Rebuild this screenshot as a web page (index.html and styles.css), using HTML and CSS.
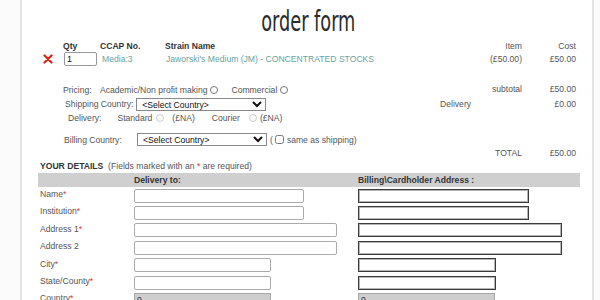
FILE: index.html
```html
<!DOCTYPE html>
<html lang="en">
<head>
    <meta charset="UTF-8">
    <title>Order form</title>
    <link rel="stylesheet" href="styles.css">
</head>
<body>
    <div class="page">
        <h1 class="title"><span>order form</span></h1>

        <!-- basket -->
        <div class="basket">
            <span></span>
            <span class="head">Qty</span>
            <span class="head">CCAP No.</span>
            <span class="head">Strain Name</span>
            <span class="num">Item</span>
            <span class="num">Cost</span>

            <span class="remove">
                <svg width="10" height="10" viewBox="0 0 10 10"><path d="M1.5 1.5 L8.5 8.5 M8.5 1.5 L1.5 8.5" stroke="#d9261c" stroke-width="2.2" stroke-linecap="round"/></svg>
            </span>
            <span><input type="text" class="qty" value="1"></span>
            <span class="teal ccap">Media:3</span>
            <span class="teal strain">Jaworski's Medium (JM) - CONCENTRATED STOCKS</span>
            <span class="num">(£50.00)</span>
            <span class="num">£50.00</span>
        </div>

        <!-- pricing and totals -->
        <div class="options">
            <div class="opt pricing">
                <span class="lbl">Pricing:</span>
                <span>Academic/Non profit making</span>
                <input type="radio" name="pricing">
                <span class="gap">Commercial</span>
                <input type="radio" name="pricing">
            </div>
            <div class="num sub">subtotal</div>
            <div class="num sub">£50.00</div>

            <div class="opt shipping">
                <span>Shipping Country:</span>
                <select class="country"><option>&lt;Select Country&gt;</option></select>
            </div>
            <div class="delivery-lbl">Delivery</div>
            <div class="num">£0.00</div>

            <div class="opt delivery">
                <span>Delivery:</span>
                <span class="std">Standard</span>
                <input type="radio" name="del" class="r-std" disabled>
                <span class="na-std">(£NA)</span>
                <span class="courier">Courier</span>
                <input type="radio" name="del" class="r-cou" disabled>
                <span class="na-cou">(£NA)</span>
            </div>
            <div></div>
            <div></div>

            <div class="opt billing">
                <span class="lbl-bill">Billing Country:</span>
                <select class="country"><option>&lt;Select Country&gt;</option></select>
                <span>(</span>
                <input type="checkbox">
                <span>same as shipping)</span>
            </div>
            <div></div>
            <div></div>

            <div class="opt"></div>
            <div class="num total">TOTAL</div>
            <div class="num total">£50.00</div>
        </div>

        <!-- address details -->
        <p class="details-title"><b>YOUR DETAILS</b> &nbsp;(Fields marked with an <span class="req">*</span> are required)</p>
        <table class="details">
            <tr class="bar">
                <th></th>
                <th>Delivery to:</th>
                <th>Billing\Cardholder Address :</th>
            </tr>
            <tr>
                <td>Name<span class="req">*</span></td>
                <td><input type="text" class="del w-m"></td>
                <td><input type="text" class="bill w-m"></td>
            </tr>
            <tr>
                <td>Institution<span class="req">*</span></td>
                <td><input type="text" class="del w-m"></td>
                <td><input type="text" class="bill w-m"></td>
            </tr>
            <tr>
                <td>Address 1<span class="req">*</span></td>
                <td><input type="text" class="del w-l"></td>
                <td><input type="text" class="bill w-l"></td>
            </tr>
            <tr>
                <td>Address 2</td>
                <td><input type="text" class="del w-l"></td>
                <td><input type="text" class="bill w-l"></td>
            </tr>
            <tr>
                <td>City<span class="req">*</span></td>
                <td><input type="text" class="del w-s"></td>
                <td><input type="text" class="bill w-s"></td>
            </tr>
            <tr>
                <td>State/County<span class="req">*</span></td>
                <td><input type="text" class="del w-s"></td>
                <td><input type="text" class="bill w-s"></td>
            </tr>
            <tr>
                <td>Country<span class="req">*</span></td>
                <td><div class="grey w-s">0</div></td>
                <td><div class="grey w-s">0</div></td>
            </tr>
        </table>
    </div>
</body>
</html>
```

FILE: styles.css
```css
body {
    margin: 0;
    background: #fbfbfb;
    font-family: "Liberation Sans", Arial, sans-serif;
    font-size: 8.6px;
    color: #555;
}
.page {
    margin-left: 20px;
    width: 574px;
    height: 300px;
    overflow: hidden;
    background: #fff;
    border-left: 2px solid #e4e4e4;
    border-right: 2px solid #e4e4e4;
    padding: 0 14px 0 16px;
    box-sizing: border-box;
}
.title {
    margin: 0;
    padding-top: 4px;
    height: 36px;
    text-align: center;
    font-family: "Liberation Sans Narrow", "DejaVu Sans Condensed", sans-serif;
    font-weight: normal;
    font-size: 29px;
    line-height: 34px;
    color: #2b2b2b;
}
.title span {
    display: inline-block;
    transform: scaleX(0.68);
}

/* basket */
.basket {
    display: grid;
    grid-template-columns: 25px 37px 65px 1fr 86px 54px;
    align-items: center;
    padding-top: 1px;
}
.basket .head {
    font-weight: bold;
    color: #333;
}
.num {
    text-align: right;
    padding-right: 2px;
}
.teal {
    color: #6aa3a0;
}
.ccap {
    padding-left: 2px;
}
.strain {
    padding-left: 1px;
}
.remove {
    padding-left: 5px;
    line-height: 0;
}
.qty {
    width: 33px;
    height: 14px;
    box-sizing: border-box;
    margin: 1px 0 0 1px;
    padding: 0 2px;
    border: 1px solid #999;
    border-radius: 2px;
    font-family: inherit;
    font-size: 9px;
    color: #111;
}

/* pricing and totals */
.options {
    display: grid;
    grid-template-columns: 1fr 86px 54px;
    align-items: center;
    margin-top: 17px;
}
.opt {
    display: flex;
    align-items: center;
    white-space: nowrap;
}
.sub {
    margin-top: -3px;
}
.pricing {
    height: 14px;
    padding-left: 25px;
}
.pricing .lbl {
    width: 37px;
}
.pricing .gap {
    margin-left: 13px;
}
input[type="radio"] {
    width: 8px;
    height: 8px;
    margin: 0 0 0 3px;
}
.shipping {
    height: 14px;
    padding-left: 27px;
}
.country {
    width: 130px;
    height: 13px;
    margin-left: 3px;
    padding: 0 0 0 1px;
    font-family: inherit;
    font-size: 8.6px;
    color: #111;
    border: 1px solid #888;
    border-radius: 0;
    background: #fff;
}
.delivery-lbl {
    padding-left: 2px;
}
.delivery {
    height: 14px;
    padding-left: 30px;
}
.std {
    margin-left: 16px;
}
.delivery input.r-std {
    margin-left: 4px;
}
.na-std {
    margin-left: 8px;
}
.courier {
    margin-left: 17px;
}
.delivery input.r-cou {
    margin-left: 9px;
}
.na-cou {
    margin-left: 3px;
}
.billing {
    height: 15px;
    margin-top: 7px;
    padding-left: 26px;
}
.lbl-bill {
    width: 70px;
}
.billing .country {
    margin-right: 3px;
}
input[type="checkbox"] {
    width: 9px;
    height: 9px;
    margin: 0 3px 0 2px;
}
.total {
    height: 13px;
    line-height: 13px;
}

/* details */
.details-title {
    margin: 0;
    padding: 0 0 0 2px;
    height: 13px;
    line-height: 12px;
}
.details-title b {
    color: #333;
}
.req {
    color: #e0302a;
}
.details {
    width: 542px;
    border-collapse: collapse;
}
.details th {
    background: #cfcfcf;
    color: #333;
    text-align: left;
    height: 14px;
    padding: 0;
}
.details td {
    height: 17.4px;
    padding: 0;
    vertical-align: middle;
}
.details td:first-child {
    width: 94px;
    padding-left: 2px;
    vertical-align: top;
    line-height: 15px;
}
.details td:nth-child(2) {
    width: 224px;
}
.del, .bill, .grey {
    display: block;
    height: 14px;
    box-sizing: border-box;
    margin: 0;
    padding: 0 2px;
    font-family: inherit;
    font-size: 8.6px;
}
.del {
    border: 1px solid #aaa;
    border-radius: 2px;
}
.bill {
    border: 1px solid #3a3a3a;
    box-shadow: inset 0 0 0 1px #b5b5b5;
}
.grey {
    background: #cecece;
    border: 1px solid #a8a8a8;
    color: #333;
    line-height: 12px;
}
.w-m { width: 170px; }
.w-l { width: 203px; }
.w-s { width: 137px; }
.bill.w-m { width: 171px; }
.bill.w-l { width: 204px; }
.bill.w-s { width: 138px; }
```
